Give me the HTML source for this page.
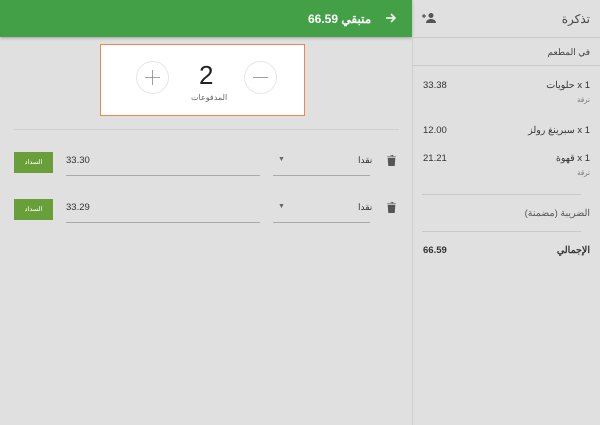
<!DOCTYPE html>
<html><head><meta charset="utf-8"><style>
*{margin:0;padding:0;box-sizing:border-box}
body{width:600px;height:425px;background:#e0e0e0;font-family:"Liberation Sans","Noto Sans CJK SC",sans-serif;position:relative;overflow:hidden;color:#333}
.a{position:absolute;white-space:nowrap;direction:ltr}
.i{display:inline-block}
</style></head><body>
<div class="a" style="left:0;top:0;width:412px;height:37px;background:#43a047;box-shadow:0 1px 3px rgba(0,0,0,.3)"></div>
<div class="a" style="left:308px;top:12px;color:#fff;font-size:12px;font-weight:bold"><span class="i">66.59</span> <span class="i">متبقي</span></div>
<svg class="a" style="left:385px;top:12px" width="12" height="12" viewBox="0 0 12 12"><path d="M1 6H10M6 2L10 6L6 10" stroke="#fff" stroke-width="1.6" fill="none"/></svg>
<div class="a" style="left:412px;top:0;width:1px;height:425px;background:#cfcfcf"></div>
<div class="a" style="left:413px;top:37px;width:187px;height:1px;background:#c8c8c8"></div>
<div class="a" style="right:10px;top:12px;font-size:12px;color:#444">تذكرة</div>
<svg class="a" style="left:422px;top:12px" width="14" height="12" viewBox="0 0 14 12"><circle cx="9" cy="3.5" r="2.5" fill="#555"/><path d="M4 11c0-3 3-4 5-4s5 1 5 4z" fill="#555"/><path d="M0 4h4M2 2v4" stroke="#555" stroke-width="1.2"/></svg>
<div class="a" style="right:10px;top:47px;font-size:9px;color:#444">في المطعم</div>
<div class="a" style="left:413px;top:65px;width:187px;height:1px;background:#c8c8c8"></div>
<div class="a" style="left:423px;top:80px;font-size:9.5px">33.38</div>
<div class="a" style="right:10px;top:80px;font-size:9.5px"><span class="i">حلويات</span> <span class="i">x 1</span></div>
<div class="a" style="right:10px;top:96px;font-size:7px;color:#777">ترقة</div>
<div class="a" style="left:423px;top:125px;font-size:9.5px">12.00</div>
<div class="a" style="right:10px;top:125px;font-size:9.5px"><span class="i">سبرينغ رولز</span> <span class="i">x 1</span></div>
<div class="a" style="left:423px;top:153px;font-size:9.5px">21.21</div>
<div class="a" style="right:10px;top:153px;font-size:9.5px"><span class="i">قهوة</span> <span class="i">x 1</span></div>
<div class="a" style="right:10px;top:169px;font-size:7px;color:#777">ترقة</div>
<div class="a" style="left:422px;top:194px;width:159px;height:1px;background:#c8c8c8"></div>
<div class="a" style="right:10px;top:208px;font-size:9.5px;color:#555;direction:rtl">الضريبة (مضمنة)</div>
<div class="a" style="left:422px;top:231px;width:159px;height:1px;background:#c8c8c8"></div>
<div class="a" style="left:423px;top:245px;font-size:9.5px;font-weight:bold">66.59</div>
<div class="a" style="right:10px;top:245px;font-size:9.5px;font-weight:bold">الإجمالي</div>

<div class="a" style="left:100px;top:44px;width:205px;height:72px;background:#fff;border:1.5px solid #f0854f"></div>
<div class="a" style="left:136px;top:61px;width:33px;height:33px;border:1px solid #e6e6e6;border-radius:50%"></div>
<svg class="a" style="left:144px;top:69px" width="17" height="17"><path d="M8.5 1v15M1 8.5h15" stroke="#888" stroke-width=".8"/></svg>
<div class="a" style="left:244px;top:61px;width:33px;height:33px;border:1px solid #e6e6e6;border-radius:50%"></div>
<svg class="a" style="left:252px;top:69px" width="17" height="17"><path d="M1 8.5h15" stroke="#888" stroke-width=".8"/></svg>
<div class="a" style="left:199px;top:60px;font-size:26px;color:#222">2</div>
<div class="a" style="left:191px;top:93px;font-size:8px;color:#666">المدفوعات</div>
<div class="a" style="left:14px;top:129px;width:385px;height:1px;background:#cfcfcf"></div>

<div class="a" style="left:14px;top:152px;width:39px;height:21px;background:#689f38"></div>
<div class="a" style="left:14px;top:158px;width:39px;text-align:center;font-size:6.5px;color:#fff">السداد</div>
<div class="a" style="left:66px;top:155px;font-size:9.5px">33.30</div>
<div class="a" style="left:66px;top:175px;width:194px;height:1px;background:#aaa"></div>
<div class="a" style="left:278px;top:156px;font-size:7px;color:#666">▼</div>
<div class="a" style="left:358px;top:155px;font-size:9px">نقدا</div>
<div class="a" style="left:273px;top:175px;width:97px;height:1px;background:#aaa"></div>
<svg class="a" style="left:387px;top:155px" width="9" height="11" viewBox="0 0 9 11"><path d="M0 1.5h9M3 0h3v1.5M1 3h7l-.6 8H1.6z" fill="#555" stroke="#555" stroke-width=".6"/></svg>

<div class="a" style="left:14px;top:199px;width:39px;height:21px;background:#689f38"></div>
<div class="a" style="left:14px;top:205px;width:39px;text-align:center;font-size:6.5px;color:#fff">السداد</div>
<div class="a" style="left:66px;top:202px;font-size:9.5px">33.29</div>
<div class="a" style="left:66px;top:222px;width:194px;height:1px;background:#aaa"></div>
<div class="a" style="left:278px;top:203px;font-size:7px;color:#666">▼</div>
<div class="a" style="left:358px;top:202px;font-size:9px">نقدا</div>
<div class="a" style="left:273px;top:222px;width:97px;height:1px;background:#aaa"></div>
<svg class="a" style="left:387px;top:202px" width="9" height="11" viewBox="0 0 9 11"><path d="M0 1.5h9M3 0h3v1.5M1 3h7l-.6 8H1.6z" fill="#555" stroke="#555" stroke-width=".6"/></svg>
</body></html>
